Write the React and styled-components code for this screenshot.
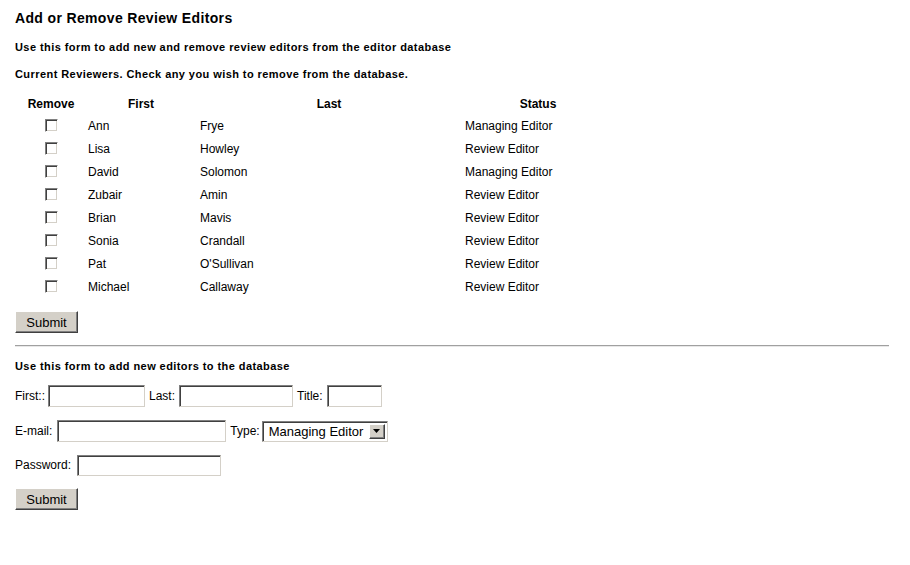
import React from 'react'
import styled, { createGlobalStyle } from 'styled-components'

const Global = createGlobalStyle`
  body {
    margin: 0;
    background: #ffffff;
    font-family: "Liberation Sans", Arial, sans-serif;
    color: #000000;
  }
`

const Page = styled.div`
  padding: 10px 15px 0 15px;
  width: 874px;
`

const Title = styled.h1`
  margin: 0;
  font-size: 14px;
  line-height: 16px;
  font-weight: bold;
  letter-spacing: 0.35px;
`

const Note = styled.p`
  margin: ${(p) => p.top}px 0 0 0;
  font-size: 11px;
  line-height: 16px;
  font-weight: bold;
  letter-spacing: 0.43px;
`

const Table = styled.table`
  margin-top: 11px;
  border-collapse: collapse;
  font-size: 12px;
`

const Head = styled.th`
  height: 21px;
  padding: 0;
  font-weight: bold;
  text-align: center;
  vertical-align: middle;
  width: ${(p) => p.w}px;
`

const Cell = styled.td`
  height: 23px;
  padding: 0 0 0 ${(p) => p.pad || 0}px;
  text-align: left;
  vertical-align: middle;
  line-height: 14px;
`

const Check = styled.input.attrs({ type: 'checkbox' })`
  appearance: none;
  display: block;
  margin: 0 0 0 30px;
  width: 13px;
  height: 13px;
  background: #ffffff;
  border: 1px solid;
  border-color: #808080 #ffffff #ffffff #808080;
  box-shadow: inset 1px 1px 0 #404040, inset -1px -1px 0 #d4d0c8;
  box-sizing: border-box;
`

const Button = styled.button`
  display: block;
  margin-top: ${(p) => p.top}px;
  width: 63px;
  height: 22px;
  padding: 0;
  font-family: "Liberation Sans", Arial, sans-serif;
  font-size: 13px;
  color: #000000;
  background: #d4d0c8;
  border: 1px solid;
  border-color: #ffffff #404040 #404040 #ffffff;
  box-shadow: inset -1px -1px 0 #808080;
  box-sizing: border-box;
`

const Rule = styled.hr`
  margin: 12px 0 0 0;
  height: 0;
  border: 0;
  border-top: 1px solid #a0a0a0;
  border-bottom: 1px solid #e8e8e8;
`

const Row = styled.div`
  display: flex;
  align-items: center;
  margin-top: ${(p) => p.top}px;
  height: 22px;
  font-size: 12px;
`

const Label = styled.span`
  margin: 0 ${(p) => p.right ?? 3}px 0 ${(p) => p.left || 0}px;
`

const Field = styled.input`
  width: ${(p) => p.w}px;
  height: ${(p) => p.h || 22}px;
  padding: 0 2px;
  font-family: "Liberation Sans", Arial, sans-serif;
  font-size: 13px;
  background: #ffffff;
  border: 1px solid;
  border-color: #808080 #d4d0c8 #d4d0c8 #808080;
  box-shadow: inset 1px 1px 0 #404040;
  box-sizing: border-box;
  outline: none;
`

const SelectBox = styled.div`
  display: flex;
  width: 126px;
  height: 21px;
  background: #ffffff;
  border: 1px solid;
  border-color: #808080 #d4d0c8 #d4d0c8 #808080;
  box-shadow: inset 1px 1px 0 #404040;
  box-sizing: border-box;
  padding: 2px;
`

const Select = styled.select`
  appearance: none;
  flex: 1;
  min-width: 0;
  border: 0;
  padding: 0 0 0 4px;
  margin: 0;
  background: transparent;
  font-family: "Liberation Sans", Arial, sans-serif;
  font-size: 13px;
  color: #000000;
  outline: none;
`

const Arrow = styled.span`
  display: flex;
  align-items: center;
  justify-content: center;
  width: 16px;
  background: #d4d0c8;
  border: 1px solid;
  border-color: #ffffff #404040 #404040 #ffffff;
  box-shadow: inset -1px -1px 0 #808080;
  box-sizing: border-box;
`

const reviewers = [
  ['Ann', 'Frye', 'Managing Editor'],
  ['Lisa', 'Howley', 'Review Editor'],
  ['David', 'Solomon', 'Managing Editor'],
  ['Zubair', 'Amin', 'Review Editor'],
  ['Brian', 'Mavis', 'Review Editor'],
  ['Sonia', 'Crandall', 'Review Editor'],
  ['Pat', "O'Sullivan", 'Review Editor'],
  ['Michael', 'Callaway', 'Review Editor'],
]

export default function App() {
  return (
    <Page>
      <Global />
      <Title>Add or Remove Review Editors</Title>
      <Note top={13}>Use this form to add new and remove review editors from the editor database</Note>
      <Note top={11}>Current Reviewers. Check any you wish to remove from the database.</Note>

      <Table>
        <thead>
          <tr>
            <Head w={72}>Remove</Head>
            <Head w={108}>First</Head>
            <Head w={268}>Last</Head>
            <Head w={150}>Status</Head>
          </tr>
        </thead>
        <tbody>
          {reviewers.map(([first, last, status]) => (
            <tr key={first}>
              <Cell><Check /></Cell>
              <Cell pad={1}>{first}</Cell>
              <Cell pad={5}>{last}</Cell>
              <Cell pad={2}>{status}</Cell>
            </tr>
          ))}
        </tbody>
      </Table>

      <Button top={13}>Submit</Button>
      <Rule />

      <Note top={11}>Use this form to add new editors to the database</Note>
      <Row top={11}>
        <Label right={3}>First::</Label>
        <Field w={97} />
        <Label left={4} right={4}>Last:</Label>
        <Field w={114} />
        <Label left={4} right={4}>Title:</Label>
        <Field w={55} />
      </Row>
      <Row top={13}>
        <Label right={5}>E-mail:</Label>
        <Field w={169} />
        <Label left={4} right={2}>Type:</Label>
        <SelectBox>
          <Select defaultValue="Managing Editor">
            <option>Managing Editor</option>
            <option>Review Editor</option>
          </Select>
          <Arrow>
            <svg width="7" height="4" viewBox="0 0 7 4">
              <path d="M0 0h7L3.5 4z" fill="#000" />
            </svg>
          </Arrow>
        </SelectBox>
      </Row>
      <Row top={12}>
        <Label right={6}>Password:</Label>
        <Field w={144} h={21} />
      </Row>
      <Button top={12}>Submit</Button>
    </Page>
  )
}
